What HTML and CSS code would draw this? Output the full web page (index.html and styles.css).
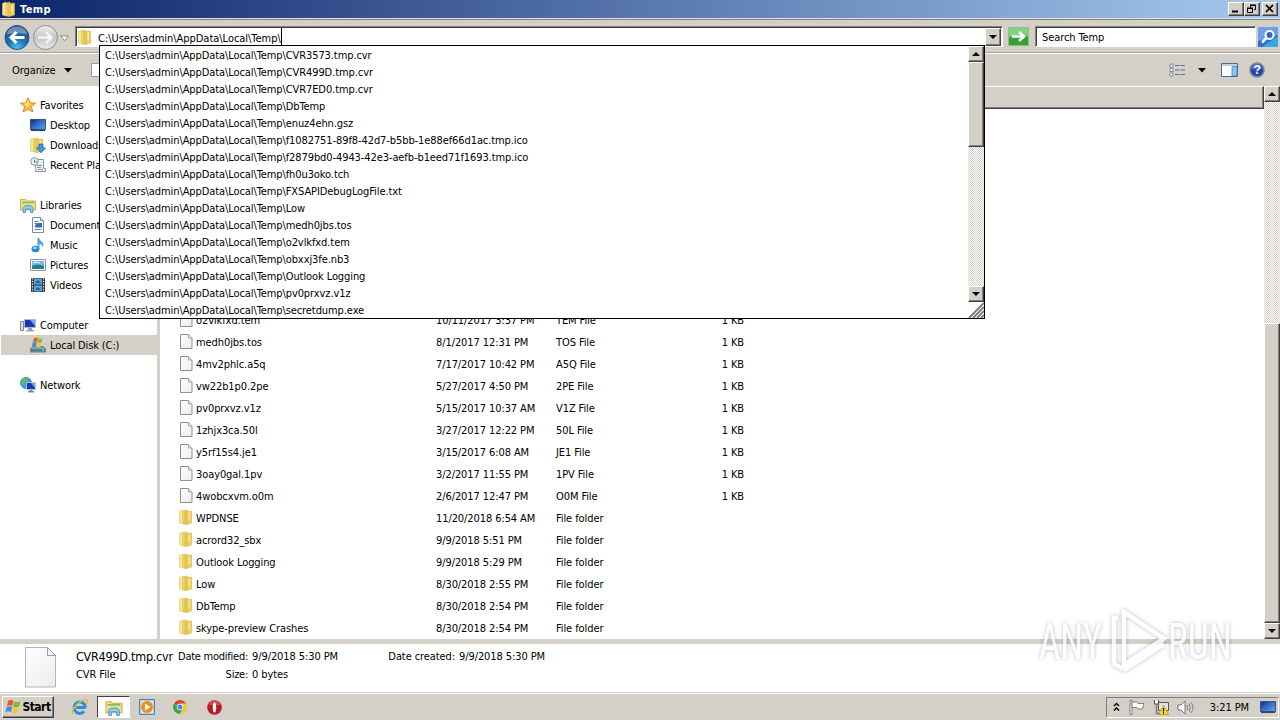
FILE: index.html
```html
<!DOCTYPE html>
<html lang="en">
<head>
    <meta charset="UTF-8">
    <meta name="viewport" content="width=device-width, initial-scale=1.0">
    <title>Temp</title>
    <link rel="stylesheet" href="styles.css">
</head>
<body>
    <!-- icons used more than once -->
    <svg class="defs" width="0" height="0">
        <defs>
            <linearGradient id="gold" x1="0" x2="1"><stop offset="0" stop-color="#f9ec9c"/><stop offset=".5" stop-color="#e2bc3c"/><stop offset="1" stop-color="#f3df82"/></linearGradient>
            <linearGradient id="blue" x1="0" y1="0" x2="1" y2="1"><stop offset="0" stop-color="#123a9c"/><stop offset="1" stop-color="#5aa6f4"/></linearGradient>
            <linearGradient id="paper" x1="0" y1="0" x2="1" y2="1"><stop offset="0" stop-color="#fff"/><stop offset="1" stop-color="#ececec"/></linearGradient>
        </defs>
        <symbol id="folder" viewBox="0 0 16 16">
            <path d="M.5 2.500L4 1v14l-3.500-1z" fill="#f6e894" stroke="#dcc568" stroke-width=".6"/>
            <path d="M4 2l4-1v14.500L4 15z" fill="url(#gold)" stroke="#d3b142" stroke-width=".6"/>
            <path d="M8 2.500l4.500-.5v12L8 15.300z" fill="#ecd061" stroke="#d3b142" stroke-width=".6"/>
            <path d="M9.500 4l1.500-.2v7l-1.500.4z" fill="#f8e99c"/>
        </symbol>
        <symbol id="file" viewBox="0 0 16 16">
            <path d="M1.500 1.500h8l3.500 3.500v10.500H1.500z" fill="url(#paper)" stroke="#8f8f8f"/>
            <path d="M9.500 1.500V5H13" fill="#e4e4e4" stroke="#a8a8a8"/>
        </symbol>
        <symbol id="library" viewBox="0 0 16 16">
            <path d="M.5 2.500h5l1 1.500h9v9H.5z" fill="#f4df86" stroke="#cfae4a"/>
            <path d="M2 5.500h12" stroke="#7fb96b" stroke-width="1.500"/>
            <path d="M3 15.500v-4q0-3 5-3t5 3v4h-2.500V12h-5v3.500z" fill="#8fcdee" stroke="#3a8fc4" stroke-width=".8"/>
        </symbol>
        <symbol id="desktop" viewBox="0 0 16 16">
            <path d="M.5 2.500h15v10H.5z" fill="url(#blue)" stroke="#3c5375"/>
            <path d="M1 12.500h14v1.500H1z" fill="#29466b"/>
            <path d="M1 3l6 0-6 7z" fill="#0e3187" opacity=".3"/>
        </symbol>
    </svg>

    <div class="window">
        <div class="title-bar">
            <svg class="icon"><use href="#folder"/></svg>
            <h1>Temp</h1>
            <div class="title-buttons">
                <span class="raised"><svg width="14" height="12"><path d="M3 8.500h6" stroke="#000" stroke-width="2"/></svg></span>
                <span class="raised"><svg width="14" height="12"><path d="M5.500 5V2.500h5v4H9M5 2h6" fill="none" stroke="#000"/><path d="M2.500 5.500h5v4h-5zM2 5h6" fill="none" stroke="#000"/></svg></span>
                <span class="raised close"><svg width="14" height="12"><path d="M3 2l7 7M10 2l-7 7" stroke="#000" stroke-width="1.700"/></svg></span>
            </div>
        </div>

        <div class="address-row">
            <svg class="nav-buttons" width="74" height="32" viewBox="0 0 74 32">
                <defs>
                    <radialGradient id="back" cx=".5" cy=".95" r=".9"><stop offset="0" stop-color="#52c6f2"/><stop offset=".45" stop-color="#1a72b6"/><stop offset="1" stop-color="#1c4c86"/></radialGradient>
                    <linearGradient id="fwd" x1="0" y1="0" x2="0" y2="1"><stop offset="0" stop-color="#efefef"/><stop offset=".5" stop-color="#c5c5c5"/><stop offset="1" stop-color="#e9e9e9"/></linearGradient>
                </defs>
                <circle cx="16" cy="16.500" r="12" fill="url(#back)" stroke="#29517c"/>
                <path d="M5.500 13.500q2-8 10.500-8t10.500 8q-10-3-21 0z" fill="#fff" opacity=".35"/>
                <path d="M23.500 16.500h-13M15.500 11L10 16.500l5.500 5.500" fill="none" stroke="#fff" stroke-width="3"/>
                <circle cx="44.500" cy="16.500" r="12" fill="url(#fwd)" stroke="#8e8e8e"/>
                <path d="M37 16.500h13M45 11l5.500 5.500-5.500 5.500" fill="none" stroke="#f4f4f4" stroke-width="2.500"/>
                <path d="M59.500 15h8l-4 4.500z" fill="#fff" stroke="#7c7c7c" stroke-width=".9"/>
            </svg>
            <div class="address-box">
                <svg class="icon"><use href="#folder"/></svg>
                <span class="path">C:\Users\admin\AppData\Local\Temp\</span>
                <span class="raised drop"><svg width="12" height="14"><path d="M2 5h8L6 9z"/></svg></span>
            </div>
            <svg class="go" width="22" height="20" viewBox="0 0 22 20">
                <rect x=".5" y=".5" width="20" height="18" fill="#35a235" stroke="#8fbf8f"/>
                <path d="M1 1h19v8Q10 7 1 10z" fill="#86cf83"/>
                <path d="M4 9.500h12M11 5l5 4.500-5 4.500" fill="none" stroke="#fff" stroke-width="2.500"/>
            </svg>
            <div class="search-box">Search Temp</div>
            <svg class="search-btn" width="20" height="20" viewBox="0 0 20 20">
                <rect width="20" height="20" fill="#2f6fd0"/>
                <path d="M0 0h20v8L0 14z" fill="#6e9fe8"/>
                <path d="M4 20h16V9z" fill="#36a9dd"/>
                <circle cx="11.500" cy="8" r="4" fill="#2f66c8" stroke="#fff" stroke-width="2"/>
                <path d="M8.500 11L4 15.500" stroke="#fff" stroke-width="2.500"/>
            </svg>
        </div>

        <div class="command-bar">
            <span>Organize</span>
            <svg class="arrow" width="8" height="5"><path d="M0 0h8L4 4.500z"/></svg>
            <svg class="open-icon" width="16" height="16"><path d="M.5 1.500h15v13H.5z" fill="#fff" stroke="#9a9a9a"/></svg>
            <div class="view-tools">
                <svg width="17" height="14" viewBox="0 0 17 14"><path d="M1 1h3v3H1zM1 5.500h3v3H1zM1 10h3v3H1z" fill="#fff" stroke="#6d7d92" stroke-width=".9"/><path d="M6 2.500h10M6 7h10M6 11.500h10" stroke="#5d7196" stroke-dasharray="4.500 1"/></svg>
                <svg class="arrow" width="8" height="5"><path d="M0 0h8L4 4.500z"/></svg>
                <svg width="17" height="14" viewBox="0 0 17 14"><path d="M.5.500h16v13H.5z" fill="#fff" stroke="#3d6ea0"/><path d="M1 1h15v2H1z" fill="#bcd4ea"/><path d="M11 3.500h5V13h-5z" fill="#8cc6e2" stroke="#3d7ea8" stroke-width=".7"/></svg>
                <svg width="16" height="16" viewBox="0 0 16 16"><circle cx="8" cy="8" r="7" fill="#2746b4" stroke="#7c8798" stroke-width="1.600"/><path d="M2.500 7q1-5 5.500-5t5.500 5z" fill="#6d8ce0" opacity=".6"/><text class="help" x="8" y="12.300" text-anchor="middle">?</text></svg>
            </div>
        </div>

        <div class="main">
            <div class="nav-pane">
                <div class="nav-item">
                    <svg class="icon" viewBox="0 0 16 16"><path d="M8 .8l2.200 5 5.300.4-4 3.500 1.300 5.300L8 12.200 3.200 15l1.300-5.300-4-3.500 5.300-.4z" fill="#fdc13c" stroke="#e07c1c" stroke-width=".9"/><path d="M8 3l1.400 3.700L8 10 4 6.800l2.700-.2z" fill="#ffe78c"/></svg>
                    <span>Favorites</span>
                </div>
                <div class="nav-item sub"><svg class="icon"><use href="#desktop"/></svg><span>Desktop</span></div>
                <div class="nav-item sub">
                    <svg class="icon" viewBox="0 0 16 16"><use href="#folder"/><path d="M9 7h4v4h2.500L11 15.800 6.500 11H9z" fill="#3b9be4" stroke="#1c65ab" stroke-width=".8"/></svg>
                    <span>Downloads</span>
                </div>
                <div class="nav-item sub">
                    <svg class="icon" viewBox="0 0 16 16"><path d="M4.500 2.500h9v9h2v3h-10q1-1 0-3z" fill="#eef3f6" stroke="#8396a4"/><path d="M7 8.500h5M7 10.500h4M8 12.500h5" stroke="#7c99b0"/><circle cx="4.500" cy="4.500" r="3.800" fill="#e8f3fa" stroke="#8396a4"/><path d="M4.500 2.500v2.500H7" fill="none" stroke="#54708a"/></svg>
                    <span>Recent Places</span>
                </div>
                <div class="nav-item group"><svg class="icon"><use href="#library"/></svg><span>Libraries</span></div>
                <div class="nav-item sub">
                    <svg class="icon" viewBox="0 0 16 16"><path d="M2.500.5h8l3 3v12h-11z" fill="#fff" stroke="#7b8fa3"/><path d="M10.500.5v3h3" fill="#d9e4ee" stroke="#7b8fa3"/><path d="M4.500 4.500h4M4.500 6.500h3M4.500 12.500h7" stroke="#5e8cc0"/><path d="M8 6h4v4.500H5V8z" fill="#3c6ea8"/></svg>
                    <span>Documents</span>
                </div>
                <div class="nav-item sub">
                    <svg class="icon" viewBox="0 0 16 16"><ellipse cx="5.500" cy="12" rx="4" ry="3.200" fill="#2689d2"/><path d="M7.500 12V1H9q.5 2.500 3 4t.5 5q-.5-3-3-3.500V12z" fill="#3da4e6"/><ellipse cx="4.800" cy="11" rx="1.800" ry="1.200" fill="#a3dcfa"/></svg>
                    <span>Music</span>
                </div>
                <div class="nav-item sub">
                    <svg class="icon" viewBox="0 0 16 16"><path d="M.5 2.500h15v11H.5z" fill="#fff" stroke="#8498a8"/><path d="M2 4h12v8H2z" fill="#75bce9"/><path d="M2 9q5-3 12 0v3H2z" fill="#267d85"/><path d="M3 6q3-2 7 0" stroke="#e8f7ff" fill="none"/></svg>
                    <span>Pictures</span>
                </div>
                <div class="nav-item sub">
                    <svg class="icon" viewBox="0 0 16 16"><path d="M1 1h14v14H1z" fill="#333"/><path d="M4 1.500h8v6H4zM4 8.500h8v6H4z" fill="#5ba2dc"/><path d="M2.500 1v14M13.500 1v14" stroke="#ddd" stroke-width="1.300" stroke-dasharray="1.500 1.200"/><path d="M5 6l3-3 3 3zM5 13l3-3 3 3z" fill="#235b9d"/></svg>
                    <span>Videos</span>
                </div>
                <div class="nav-item group">
                    <svg class="icon" viewBox="0 0 16 16"><path d="M.5 4.500h3v9h-3z" fill="#d9dde2" stroke="#7f8791"/><path d="M4.500 2.500h11v8h-11z" fill="#1935b8" stroke="#b6bcc6"/><path d="M10 3l5 0v6z" fill="#7ba3f4"/><path d="M8 11h4v2h2v1.500H6V13h2z" fill="#9ba1aa"/></svg>
                    <span>Computer</span>
                </div>
                <div class="nav-item sub selected">
                    <svg class="icon" viewBox="0 0 16 16"><path d="M3 9.500h10l2.500 2v3.500H.5v-3.500z" fill="#8ba0ac" stroke="#627682" stroke-width=".8"/><path d="M1 12h14v2.500H1z" fill="#41859e"/><path d="M12 13h2" stroke="#6dff6d"/><path d="M4 1q2-1 4 0L7 5Q5 4 3 5z" fill="#ea5b25"/><path d="M8.500 1.300q2 1 4 0l-1 4q-2 1-4 0z" fill="#7ebf35"/><path d="M2.800 5.600q2-1 4 0l-1 4q-2-1-4 0z" fill="#4189df"/><path d="M7.300 6q2 1 4 0l-1 4q-2 1-4 0z" fill="#f6c42c"/></svg>
                    <span>Local Disk (C:)</span>
                </div>
                <div class="nav-item group">
                    <svg class="icon" viewBox="0 0 16 16"><circle cx="6" cy="6" r="5.500" fill="#3c9ed6" stroke="#2873a8" stroke-width=".7"/><path d="M2 3q3-3 5-1.500T5 6 4 10Q0 8 2 3z" fill="#5eba63"/><path d="M6.500 5.500h9v7h-9z" fill="#1935b8" stroke="#bcc3cd"/><path d="M11 6h4v5z" fill="#7ba3f4"/><path d="M9.500 13h3v1h1.500v1.500H8V14h1.500z" fill="#7e8791"/></svg>
                    <span>Network</span>
                </div>
            </div>
            <div class="splitter"></div>
            <div class="content">
                <div class="list-header"></div>
                <div class="file-list">
                    <div class="row"><svg class="icon"><use href="#file"/></svg><span>o2vlkfxd.tem</span><span>10/11/2017 3:37 PM</span><span>TEM File</span><span class="size">1 KB</span></div>
                    <div class="row"><svg class="icon"><use href="#file"/></svg><span>medh0jbs.tos</span><span>8/1/2017 12:31 PM</span><span>TOS File</span><span class="size">1 KB</span></div>
                    <div class="row"><svg class="icon"><use href="#file"/></svg><span>4mv2phlc.a5q</span><span>7/17/2017 10:42 PM</span><span>A5Q File</span><span class="size">1 KB</span></div>
                    <div class="row"><svg class="icon"><use href="#file"/></svg><span>vw22b1p0.2pe</span><span>5/27/2017 4:50 PM</span><span>2PE File</span><span class="size">1 KB</span></div>
                    <div class="row"><svg class="icon"><use href="#file"/></svg><span>pv0prxvz.v1z</span><span>5/15/2017 10:37 AM</span><span>V1Z File</span><span class="size">1 KB</span></div>
                    <div class="row"><svg class="icon"><use href="#file"/></svg><span>1zhjx3ca.50l</span><span>3/27/2017 12:22 PM</span><span>50L File</span><span class="size">1 KB</span></div>
                    <div class="row"><svg class="icon"><use href="#file"/></svg><span>y5rf15s4.je1</span><span>3/15/2017 6:08 AM</span><span>JE1 File</span><span class="size">1 KB</span></div>
                    <div class="row"><svg class="icon"><use href="#file"/></svg><span>3oay0gal.1pv</span><span>3/2/2017 11:55 PM</span><span>1PV File</span><span class="size">1 KB</span></div>
                    <div class="row"><svg class="icon"><use href="#file"/></svg><span>4wobcxvm.o0m</span><span>2/6/2017 12:47 PM</span><span>O0M File</span><span class="size">1 KB</span></div>
                    <div class="row"><svg class="icon"><use href="#folder"/></svg><span>WPDNSE</span><span>11/20/2018 6:54 AM</span><span>File folder</span></div>
                    <div class="row"><svg class="icon"><use href="#folder"/></svg><span>acrord32_sbx</span><span>9/9/2018 5:51 PM</span><span>File folder</span></div>
                    <div class="row"><svg class="icon"><use href="#folder"/></svg><span>Outlook Logging</span><span>9/9/2018 5:29 PM</span><span>File folder</span></div>
                    <div class="row"><svg class="icon"><use href="#folder"/></svg><span>Low</span><span>8/30/2018 2:55 PM</span><span>File folder</span></div>
                    <div class="row"><svg class="icon"><use href="#folder"/></svg><span>DbTemp</span><span>8/30/2018 2:54 PM</span><span>File folder</span></div>
                    <div class="row"><svg class="icon"><use href="#folder"/></svg><span>skype-preview Crashes</span><span>8/30/2018 2:54 PM</span><span>File folder</span></div>
                </div>
            </div>
            <div class="scrollbar">
                <span class="raised sb-btn"><svg width="12" height="12"><path d="M2 8h8L6 4z"/></svg></span>
                <span class="track"></span>
                <span class="raised thumb"></span>
                <span class="raised sb-btn"><svg width="12" height="12"><path d="M2 4h8L6 8z"/></svg></span>
            </div>
        </div>

        <div class="details">
            <svg class="big-file" width="32" height="41" viewBox="0 0 32 41"><path d="M.5.500h22l8 8v31.500H.5z" fill="url(#paper)" stroke="#b5b5b5"/><path d="M22.500.5v8h8z" fill="#f1f1f1" stroke="#9d9d9d"/></svg>
            <div class="details-name">
                <p class="big">CVR499D.tmp.cvr</p>
                <p>CVR File</p>
            </div>
            <div class="details-labels">
                <p>Date modified:</p>
                <p>Size:</p>
            </div>
            <div class="details-values">
                <p>9/9/2018 5:30 PM</p>
                <p>0 bytes</p>
            </div>
            <div class="details-labels created"><p>Date created:</p></div>
            <div class="details-values"><p>9/9/2018 5:30 PM</p></div>
        </div>
    </div>

    <div class="taskbar">
        <div class="start raised">
            <svg width="16" height="16" viewBox="0 0 16 16"><path d="M3 2q3-2 5.500 0L7.300 7Q5 5.500 2 7z" fill="#e8562a"/><path d="M9.300 2.400q3 1.600 6 0L14 7.500q-3 1.500-5.700 0z" fill="#7cba32"/><path d="M1.700 8q3-1.500 5.400 0l-1.200 5Q3.500 11.500.4 13z" fill="#3f8be0"/><path d="M8 8.500q3 1.500 5.700 0l-1.200 5q-3 1.500-5.700 0z" fill="#f7c62d"/></svg>
            <b>Start</b>
        </div>
        <div class="quick first">
            <svg width="18" height="18" viewBox="0 0 18 18"><path d="M14.500 9.500H5.300M14.500 9.500A5.700 5.700 0 1 0 13 13.600" fill="none" stroke="#2a8fd8" stroke-width="3"/><path d="M2.500 15.500Q-.5 16 3 10 9 2 15 1.500q3 .5 0 4.500" fill="none" stroke="#e8b82e" stroke-width="1.400"/></svg>
        </div>
        <div class="quick active"><svg width="18" height="17"><use href="#library"/></svg></div>
        <div class="quick">
            <svg width="16" height="16" viewBox="0 0 16 16"><path d="M.5.500h15v15H.5z" fill="#a9cdee" stroke="#4c83c0"/><path d="M2 2h12v12H2z" fill="#dcebf8"/><circle cx="8" cy="8" r="6" fill="#f28c12"/><path d="M6 4.500l5.500 3.500L6 11.500z" fill="#fff"/></svg>
        </div>
        <div class="quick">
            <svg width="14" height="14" viewBox="0 0 14 14"><circle cx="7" cy="7" r="7" fill="#f6c932"/><path d="M7 7L1 3.500A7 7 0 0 1 13 3.500H7z" fill="#dc4437"/><path d="M7 7L1 3.500A7 7 0 0 0 6.500 14L10 8.500z" fill="#3aa257"/><circle cx="7" cy="7" r="3.200" fill="#fff"/><circle cx="7" cy="7" r="2.500" fill="#4285e8"/></svg>
        </div>
        <div class="quick last">
            <svg width="15" height="15" viewBox="0 0 15 15"><circle cx="7.500" cy="7.500" r="7.300" fill="#b81a1e"/><path d="M1.500 5Q3 .8 7.500.800T13.500 5z" fill="#e0686a" opacity=".6"/><ellipse cx="7.500" cy="7.500" rx="1.700" ry="5" fill="#fff"/></svg>
        </div>
        <div class="tray">
            <svg width="7" height="10" viewBox="0 0 7 10"><path d="M1 4l2.500-2.500L6 4M1 8.500L3.500 6 6 8.500" fill="none" stroke="#000" stroke-width="1.300"/></svg>
            <svg class="flag" width="16" height="15" viewBox="0 0 16 15"><path d="M1 .5h2v14H1z" fill="#fff" stroke="#666" stroke-width=".8"/><path d="M3 2h5l1 1.500h6L13.500 9H9L8 7.500H3z" fill="#fff" stroke="#666" stroke-width=".8"/></svg>
            <svg class="net" width="16" height="16" viewBox="0 0 16 16"><path d="M5.500 3.500h10v8h-10z" fill="#dfe3e8" stroke="#555"/><path d="M1.500 1v4h4V1" fill="#fff" stroke="#555" stroke-width="1.200"/><path d="M3.500 5v9.500H8" fill="none" stroke="#777" stroke-width="1.400"/><path d="M10.500 6l5 9.500h-10z" fill="#ffd92e" stroke="#b58a10" stroke-width=".7"/><path d="M10.500 9v3.500M10.500 13.300v1.200" stroke="#000" stroke-width="1.200"/></svg>
            <svg class="vol" width="17" height="15" viewBox="0 0 17 15"><path d="M1 5h3l4-4v13l-4-4H1z" fill="#fff" stroke="#666" stroke-width=".9"/><path d="M10 5q1.500 2.500 0 5M12 3.500q2.700 4 0 8M14 2q4 5.500 0 11" fill="none" stroke="#777" stroke-width=".9"/></svg>
            <span class="clock">3:21 PM</span>
            <svg class="show" width="16" height="16"><use href="#desktop"/></svg>
        </div>
    </div>

    <!-- auto-complete list under the address box -->
    <div class="suggest">
        <ul>
            <li>C:\Users\admin\AppData\Local\Temp\CVR3573.tmp.cvr</li>
            <li>C:\Users\admin\AppData\Local\Temp\CVR499D.tmp.cvr</li>
            <li>C:\Users\admin\AppData\Local\Temp\CVR7ED0.tmp.cvr</li>
            <li>C:\Users\admin\AppData\Local\Temp\DbTemp</li>
            <li>C:\Users\admin\AppData\Local\Temp\enuz4ehn.gsz</li>
            <li>C:\Users\admin\AppData\Local\Temp\f1082751-89f8-42d7-b5bb-1e88ef66d1ac.tmp.ico</li>
            <li>C:\Users\admin\AppData\Local\Temp\f2879bd0-4943-42e3-aefb-b1eed71f1693.tmp.ico</li>
            <li>C:\Users\admin\AppData\Local\Temp\fh0u3oko.tch</li>
            <li>C:\Users\admin\AppData\Local\Temp\FXSAPIDebugLogFile.txt</li>
            <li>C:\Users\admin\AppData\Local\Temp\Low</li>
            <li>C:\Users\admin\AppData\Local\Temp\medh0jbs.tos</li>
            <li>C:\Users\admin\AppData\Local\Temp\o2vlkfxd.tem</li>
            <li>C:\Users\admin\AppData\Local\Temp\obxxj3fe.nb3</li>
            <li>C:\Users\admin\AppData\Local\Temp\Outlook Logging</li>
            <li>C:\Users\admin\AppData\Local\Temp\pv0prxvz.v1z</li>
            <li>C:\Users\admin\AppData\Local\Temp\secretdump.exe</li>
        </ul>
        <div class="scrollbar">
            <span class="raised sb-btn"><svg width="12" height="12"><path d="M2 8h8L6 4z"/></svg></span>
            <span class="raised thumb"></span>
            <span class="track"></span>
            <span class="raised sb-btn"><svg width="12" height="12"><path d="M2 4h8L6 8z"/></svg></span>
            <svg class="grip" width="16" height="16"><path d="M1 16L16 1M5 16L16 5M9 16l7-7M13 16l3-3" stroke="#777" stroke-width="1.800"/></svg>
        </div>
    </div>

    <svg class="watermark" width="250" height="80" viewBox="0 0 250 80">
        <text x="9" y="54" textLength="63" lengthAdjust="spacingAndGlyphs">ANY</text>
        <path d="M88 13h-4v46l10 5M94 7l40 26.500-40 26.500zM94 65l40-26" fill="none" stroke="#fff" stroke-width="4.500"/>
        <text x="138" y="54" textLength="64" lengthAdjust="spacingAndGlyphs">RUN</text>
    </svg>
</body>
</html>
```
FILE: styles.css
```css
*{
    margin: 0;
    padding: 0;
    box-sizing: border-box;
}
body{
    width: 1280px;
    height: 720px;
    overflow: hidden;
    position: relative;
    display: flex;
    flex-direction: column;
    background: #d4d0c8;
    color: #000;
    font-family: "DejaVu Sans Condensed", "DejaVu Sans", sans-serif;
    font-stretch: condensed;
    font-size: 11px;
    letter-spacing: -0.09px;
    white-space: nowrap;
}
svg{
    display: block;
    flex: none;
}
.defs{
    position: absolute;
}
.icon{
    width: 16px;
    height: 16px;
}
.raised{
    background: #d4d0c8;
    border: 1px solid;
    border-color: #fff #404040 #404040 #fff;
    box-shadow: inset -1px -1px #808080;
    display: flex;
    align-items: center;
    justify-content: center;
}
.window{
    height: 692px;
    display: flex;
    flex-direction: column;
}

/* title bar */
.title-bar{
    height: 18px;
    display: flex;
    align-items: center;
    padding: 0 2px;
    background: linear-gradient(to right, #0a246a, #a6caf0);
}
.title-bar h1{
    flex: 1;
    margin-left: 2px;
    color: #fff;
    font-size: 11px;
    letter-spacing: 0.4px;
}
.title-buttons{
    display: flex;
}
.title-buttons .raised{
    width: 16px;
    height: 14px;
}
.title-buttons .close{
    margin-left: 2px;
}

/* back, forward, address and search */
.address-row{
    height: 36px;
    display: flex;
    align-items: center;
    border-top: 1px solid #e6e3dd;
    border-bottom: 1px solid #fff;
    box-shadow: inset 0 1px #808080, inset 0 -1px #a5a19a;
    padding: 1px 1px 0 1px;
}
.nav-buttons{
    width: 74px;
}
.address-box{
    width: 928px;
    height: 21px;
    display: flex;
    align-items: center;
    background: #fff;
    border: 1px solid;
    border-color: #808080 #fff #fff #808080;
    box-shadow: inset 1px 1px #404040;
    padding: 1px 1px 0 2px;
}
.path{
    margin-left: 4px;
    margin-right: auto;
    padding-top: 4px;
    border-right: 1px solid #000;
    line-height: 14px;
    letter-spacing: -0.03px;
}
.drop{
    width: 16px;
    height: 18px;
}
.go{
    margin: 0 5px;
}
.search-box{
    width: 221px;
    height: 21px;
    background: #fff;
    border: 1px solid;
    border-color: #808080 #fff #fff #808080;
    box-shadow: inset 1px 1px #404040;
    line-height: 21px;
    padding-left: 6px;
}
.search-btn{
    margin-left: 2px;
}

.command-bar{
    height: 32px;
    display: flex;
    align-items: center;
    padding-left: 12px;
    padding-right: 15px;
}
.command-bar .arrow{
    margin-left: 8px;
}
.open-icon{
    margin-left: 19px;
}
.view-tools{
    margin-left: auto;
    display: flex;
    align-items: center;
}
.view-tools .arrow{
    margin: 0 15px 0 12px;
}
.view-tools svg:last-child{
    margin-left: 11px;
}
.help{
    fill: #fff;
    font: bold 12px "Liberation Sans", sans-serif;
}

/* folder tree and file list */
.main{
    height: 553px;
    display: flex;
    background: #fff;
}
.nav-pane{
    width: 157px;
    padding: 9px 0 0 1px;
    letter-spacing: -0.12px;
}
.nav-item{
    height: 20px;
    display: flex;
    align-items: center;
    gap: 4px;
    padding-left: 19px;
}
.nav-item.sub{
    padding-left: 29px;
}
.nav-item.group{
    margin-top: 20px;
}
.nav-item.selected{
    background: #d4d0c8;
}
.splitter{
    width: 3px;
    background: #d4d0c8;
}
.content{
    flex: 1;
    display: flex;
    flex-direction: column;
}
.list-header{
    height: 23px;
    background: #d4d0c8;
    border: 1px solid;
    border-color: #fff #404040 #404040 #fff;
    box-shadow: inset -1px -1px #808080;
}
.file-list{
    flex: 1;
    min-height: 0;
    overflow: hidden;
    display: flex;
    flex-direction: column;
    justify-content: flex-end;
    padding-left: 18px;
}
.row{
    height: 22px;
    flex: none;
    display: grid;
    grid-template-columns: 18px 240px 120px 148px 40px;
    align-items: center;
}
.row .icon{
    margin: -2px 0 0 1px;
}
.size{
    text-align: right;
}

.scrollbar{
    width: 16px;
    display: flex;
    flex-direction: column;
    background: repeating-conic-gradient(#fff 0 25%, #d4d0c8 0 50%) 0 0 / 2px 2px;
}
.sb-btn{
    width: 16px;
    height: 16px;
}
.main .track{
    height: 221px;
}
.main .thumb{
    height: 300px;
}

/* details pane */
.details{
    height: 53px;
    display: flex;
    background: #fff;
    border-top: 5px solid #d4d0c8;
    padding-left: 25px;
    line-height: 18px;
}
.big-file{
    margin-top: 3px;
}
.details-name{
    width: 95px;
    margin-left: 19px;
    padding-top: 4px;
}
.details-name .big{
    font-size: 12.5px;
    letter-spacing: -0.25px;
}
.details-labels{
    width: 77px;
    text-align: right;
    padding-top: 4px;
    letter-spacing: -0.25px;
}
.details-values{
    width: 136px;
    padding: 4px 0 0 4px;
}
.details-labels.created{
    width: 71px;
    letter-spacing: -0.09px;
}

/* taskbar */
.taskbar{
    height: 28px;
    display: flex;
    align-items: center;
    padding: 1px 1px 0 2px;
    border-top: 1px solid #d4d0c8;
    box-shadow: inset 0 1px #fff;
}
.start{
    width: 52px;
    height: 22px;
    gap: 1px;
    margin-right: 10px;
}
.start b{
    font-size: 12px;
    letter-spacing: -0.5px;
}
.quick{
    width: 33px;
    height: 22px;
    display: flex;
    align-items: center;
    justify-content: center;
}
.quick.first{
    padding-right: 2px;
}
.quick.last{
    padding-left: 3px;
}
.quick.active{
    background: #fff;
    border: 1px solid;
    border-color: #404040 #fff #fff #404040;
}
.tray{
    width: 173px;
    height: 21px;
    margin-left: auto;
    display: flex;
    align-items: center;
    padding-left: 6px;
    border: 1px solid;
    border-color: #808080 #fff #fff #808080;
}
.tray .flag{
    margin-left: 9px;
}
.tray .net,
.tray .vol{
    margin-left: 8px;
}
.clock{
    margin-left: auto;
}
.show{
    margin: 0 2px 0 11px;
}

.suggest{
    position: absolute;
    left: 99px;
    top: 45px;
    width: 886px;
    height: 274px;
    display: flex;
    background: #fff;
    border: 1px solid #000;
}
.suggest ul{
    flex: 1;
    list-style: none;
    padding: 1px 0 0 5px;
    line-height: 17px;
}
.suggest .thumb{
    height: 85px;
}
.suggest .track{
    flex: 1;
}
.suggest .grip{
    background: #fff;
}

.watermark{
    position: absolute;
    left: 1030px;
    top: 605px;
    opacity: .75;
    filter: drop-shadow(0 0 2px rgba(0, 0, 0, .35));
}
.watermark text{
    font-family: Roboto, sans-serif;
    font-size: 50px;
    letter-spacing: 0;
    fill: #fff;
}
```
